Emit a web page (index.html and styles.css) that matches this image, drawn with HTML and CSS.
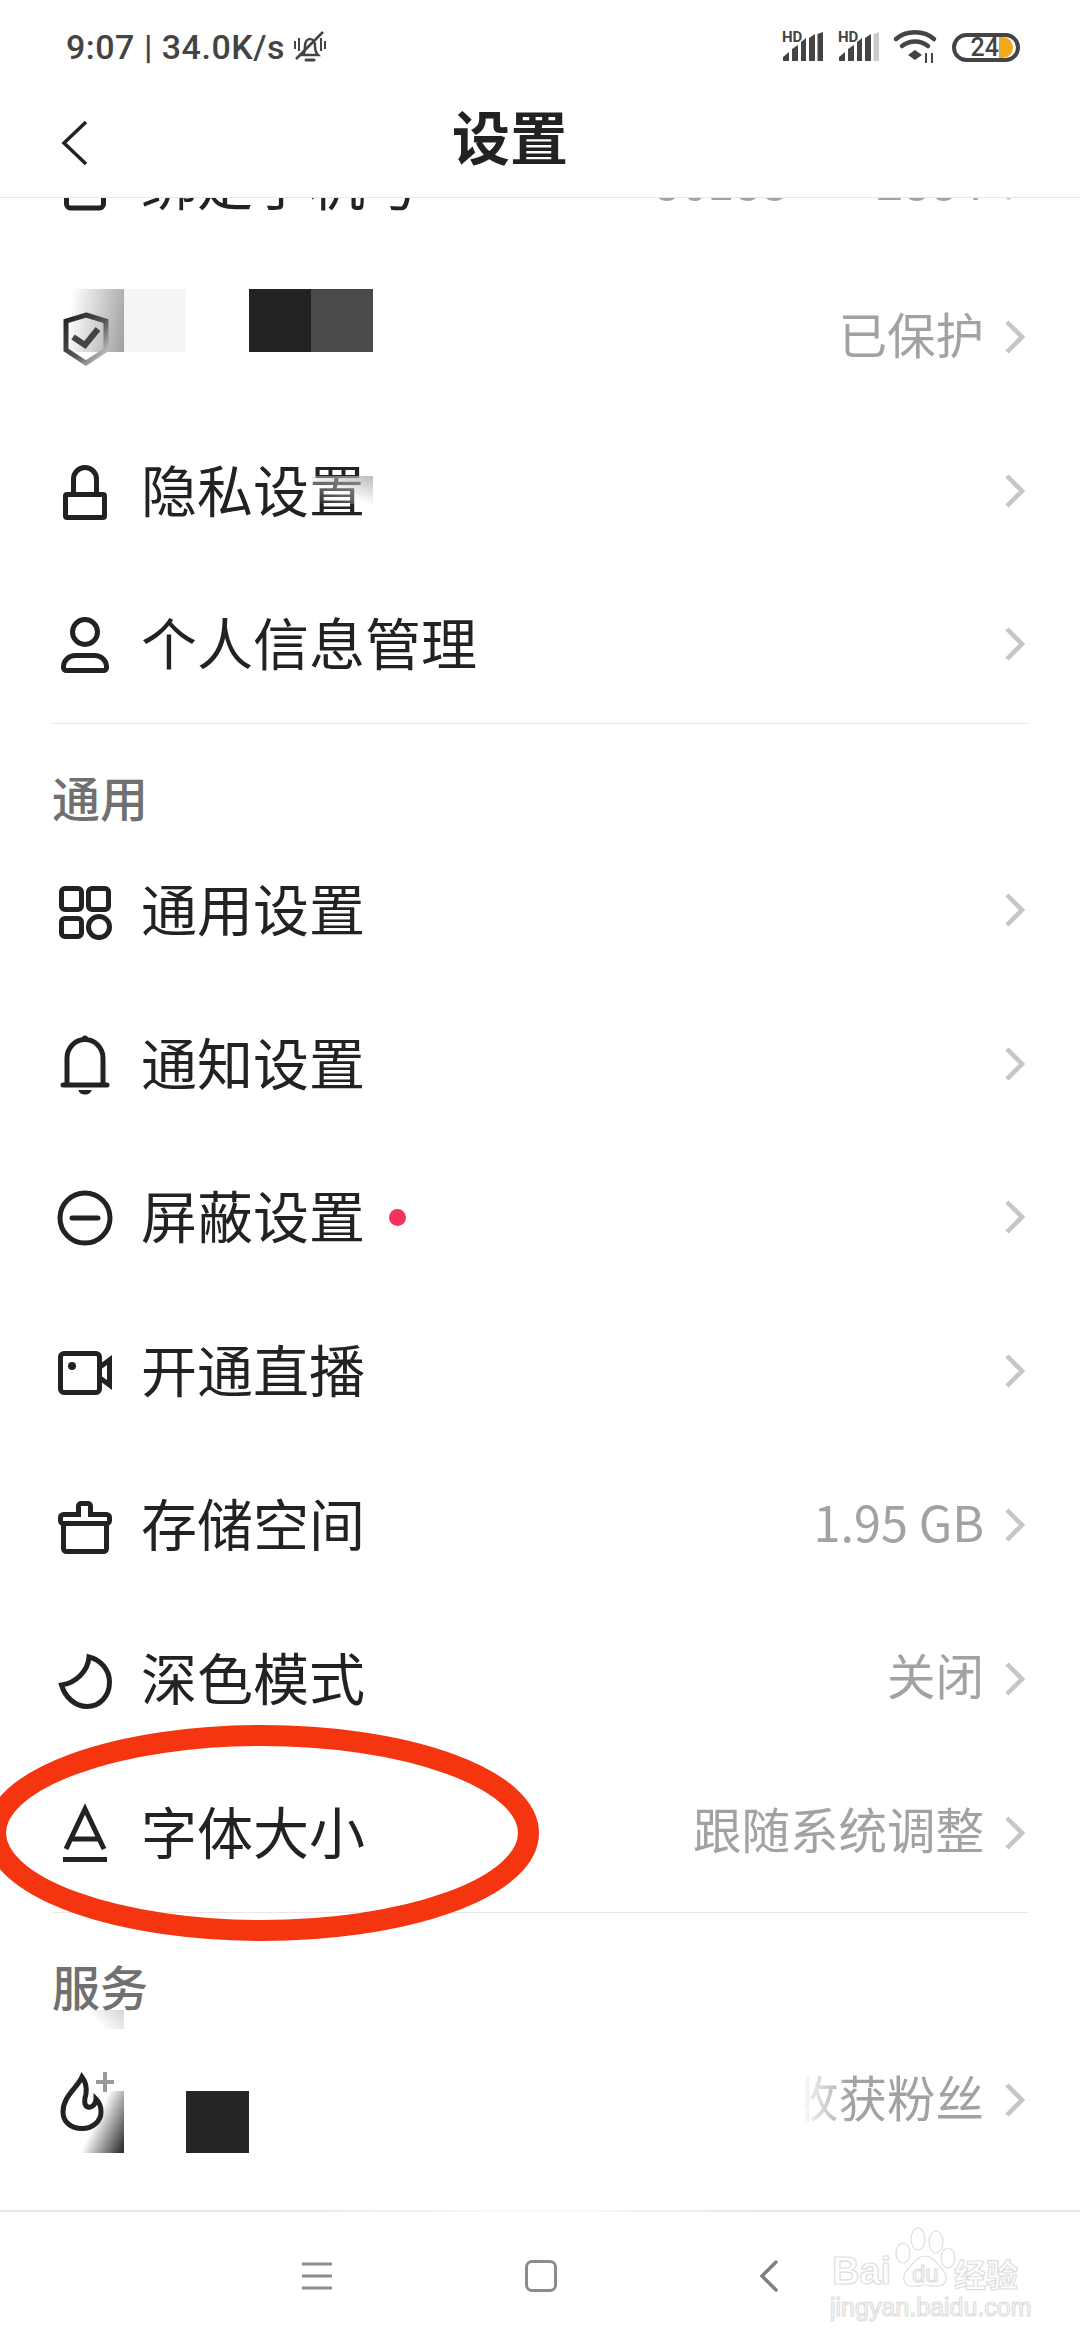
FILE: index.html
```html
<!DOCTYPE html>
<html lang="zh-CN">
<head>
    <meta charset="UTF-8">
    <meta name="viewport" content="width=device-width, initial-scale=1.0">
    <title>设置</title>
    <link rel="stylesheet" href="styles.css">
</head>
<body>
    <!-- Status bar -->
    <div class="status-bar">
        <div class="status-left">
            <span class="status-text">9:07 | 34.0K/s</span>
            <svg class="status-bell" width="34" height="32" viewBox="0 0 34 32">
                <path d="M10 24c2-2 2-5 2-9 0-4 2-7 5-7s5 3 5 7c0 4 1 7 3 9z" fill="none" stroke="#444" stroke-width="2.500"/>
                <path d="M13 29h8" stroke="#444" stroke-width="3" stroke-linecap="round"/>
                <path d="M3 28L30 1" stroke="#444" stroke-width="2.500"/>
                <path d="M2 10v8M6 7v13M28 7v13M32 10v8" stroke="#444" stroke-width="2"/>
            </svg>
        </div>
        <div class="status-right">
            <svg class="signal" width="42" height="30" viewBox="0 0 42 30">
                <text x="0" y="10" class="signal-hd">HD</text>
                <path d="M1 29V25l6-5v9z M10 29V17l6-4v16z M19 29V10l5-4v23z M27 29V6l6-4v27z" fill="#444"/>
                <path d="M35.500 29V2l5.500-2v29z" fill="#444"/>
            </svg>
            <svg class="signal" width="42" height="30" viewBox="0 0 42 30">
                <text x="0" y="10" class="signal-hd">HD</text>
                <path d="M1 29V25l6-5v9z M10 29V17l6-4v16z M19 29V10l5-4v23z M27 29V6l6-4v27z" fill="#444"/>
                <path d="M35.500 29V2l5.500-2v29z" fill="#ccc"/>
            </svg>
            <svg class="wifi" width="44" height="34" viewBox="0 0 44 34">
                <path d="M2 9C12 0 30 0 40 9" fill="none" stroke="#444" stroke-width="4.500" stroke-linecap="round"/>
                <path d="M8 16c8-6 18-6 26 0" fill="none" stroke="#444" stroke-width="4.500" stroke-linecap="round"/>
                <path d="M14 25l7-5 7 5-7 5z" fill="#444"/>
                <path d="M32 23v10M38 23v10" stroke="#444" stroke-width="2"/>
            </svg>
            <div class="battery">
                <span class="battery-num">24</span>
                <span class="battery-level"></span>
            </div>
        </div>
    </div>

    <!-- Title bar -->
    <div class="top-bar">
        <svg class="back" width="27" height="46" viewBox="0 0 27 46">
            <path d="M25 2L3 23l22 21" fill="none" stroke="#222" stroke-width="3.500"/>
        </svg>
        <h1 class="title">设置</h1>
    </div>

    <!-- List, scrolled so the first row is cut off by the title bar -->
    <div class="content">
        <div class="list">
            <div class="row">
                <svg class="icon" width="54" height="60" viewBox="0 0 54 60">
                    <rect x="8.500" y="-6" width="37" height="60" rx="4" fill="none" stroke="#222" stroke-width="5"/>
                </svg>
                <span class="name">绑定手机号</span>
                <span class="value value-phone">86188 **** 2884</span>
                <svg class="arrow" width="20" height="34" viewBox="0 0 20 34"><path d="M2 2l15 15L2 32" fill="none" stroke="#c6c6c6" stroke-width="4.500"/></svg>
            </div>
            <div class="row">
                <svg class="icon icon-top" width="54" height="60" viewBox="0 0 54 60">
                    <defs>
                        <linearGradient id="shieldFade" x1="0" y1="0" x2="1" y2="1">
                            <stop offset="0" stop-color="#222"/>
                            <stop offset="0.55" stop-color="#555"/>
                            <stop offset="1" stop-color="#ddd"/>
                        </linearGradient>
                    </defs>
                    <path d="M28 8l20 6v29L28 56 8 43V14z" fill="none" stroke="url(#shieldFade)" stroke-width="5"/>
                    <path d="M15 30l12 8 13-16" fill="none" stroke="#444" stroke-width="6"/>
                </svg>
                <span class="name"></span>
                <span class="value">已保护</span>
                <svg class="arrow" width="20" height="34" viewBox="0 0 20 34"><path d="M2 2l15 15L2 32" fill="none" stroke="#c6c6c6" stroke-width="4.500"/></svg>
            </div>
            <div class="row">
                <svg class="icon" width="54" height="60" viewBox="0 0 54 60">
                    <rect x="7.500" y="33.500" width="39" height="23" rx="1.500" fill="none" stroke="#222" stroke-width="5"/>
                    <path d="M15.500 33V18a11.500 11.500 0 0 1 23 0v15" fill="none" stroke="#222" stroke-width="5"/>
                </svg>
                <span class="name">隐私设置</span>
                <svg class="arrow" width="20" height="34" viewBox="0 0 20 34"><path d="M2 2l15 15L2 32" fill="none" stroke="#c6c6c6" stroke-width="4.500"/></svg>
            </div>
            <div class="row">
                <svg class="icon" width="54" height="60" viewBox="0 0 54 60">
                    <circle cx="27" cy="18" r="12.500" fill="none" stroke="#222" stroke-width="5"/>
                    <path d="M5.500 52a12 11 0 0 1 12-10.500h19a12 11 0 0 1 12 10.500v1.500a3 3 0 0 1-3 3h-37a3 3 0 0 1-3-3z" fill="none" stroke="#222" stroke-width="5"/>
                </svg>
                <span class="name">个人信息管理</span>
                <svg class="arrow" width="20" height="34" viewBox="0 0 20 34"><path d="M2 2l15 15L2 32" fill="none" stroke="#c6c6c6" stroke-width="4.500"/></svg>
            </div>
        </div>

        <div class="section">
            <div class="section-title">通用</div>
        </div>
        <div class="list list-general">
            <div class="row">
                <svg class="icon" width="54" height="60" viewBox="0 0 54 60">
                    <rect x="3.500" y="8.500" width="20" height="21" rx="3.500" fill="none" stroke="#222" stroke-width="5"/>
                    <rect x="30.500" y="8.500" width="20" height="21" rx="3.500" fill="none" stroke="#222" stroke-width="5"/>
                    <rect x="3.500" y="38.500" width="20" height="18" rx="3.500" fill="none" stroke="#222" stroke-width="5"/>
                    <circle cx="41" cy="47" r="10.500" fill="none" stroke="#222" stroke-width="5"/>
                </svg>
                <span class="name">通用设置</span>
                <svg class="arrow" width="20" height="34" viewBox="0 0 20 34"><path d="M2 2l15 15L2 32" fill="none" stroke="#c6c6c6" stroke-width="4.500"/></svg>
            </div>
            <div class="row">
                <svg class="icon" width="54" height="60" viewBox="0 0 54 60">
                    <path d="M9 50V24a18 18.500 0 0 1 36 0v26" fill="none" stroke="#222" stroke-width="5"/>
                    <path d="M5 51h44" stroke="#222" stroke-width="5" stroke-linecap="round"/>
                    <circle cx="27" cy="4.500" r="3" fill="#222"/>
                    <path d="M20.500 56h13a6.500 4.500 0 0 1-13 0z" fill="#222"/>
                </svg>
                <span class="name">通知设置</span>
                <svg class="arrow" width="20" height="34" viewBox="0 0 20 34"><path d="M2 2l15 15L2 32" fill="none" stroke="#c6c6c6" stroke-width="4.500"/></svg>
            </div>
            <div class="row">
                <svg class="icon" width="54" height="60" viewBox="0 0 54 60">
                    <circle cx="27" cy="31" r="25" fill="none" stroke="#222" stroke-width="5"/>
                    <path d="M14 31h26" stroke="#222" stroke-width="5" stroke-linecap="round"/>
                </svg>
                <span class="name">屏蔽设置</span>
                <span class="dot"></span>
                <svg class="arrow" width="20" height="34" viewBox="0 0 20 34"><path d="M2 2l15 15L2 32" fill="none" stroke="#c6c6c6" stroke-width="4.500"/></svg>
            </div>
            <div class="row">
                <svg class="icon" width="54" height="60" viewBox="0 0 54 60">
                    <rect x="2.500" y="12.500" width="39" height="39" rx="3.500" fill="none" stroke="#222" stroke-width="5"/>
                    <path d="M42 26l9.500-7v25L42 37" fill="none" stroke="#222" stroke-width="5"/>
                    <circle cx="14" cy="25" r="4" fill="#222"/>
                </svg>
                <span class="name">开通直播</span>
                <svg class="arrow" width="20" height="34" viewBox="0 0 20 34"><path d="M2 2l15 15L2 32" fill="none" stroke="#c6c6c6" stroke-width="4.500"/></svg>
            </div>
            <div class="row">
                <svg class="icon" width="54" height="60" viewBox="0 0 54 60">
                    <path d="M20.500 19.500H5.500a3 3 0 0 0-3 3v3a3 3 0 0 0 3 3h43a3 3 0 0 0 3-3v-3a3 3 0 0 0-3-3H32.500V11a2.500 2.500 0 0 0-2.500-2.500h-7a2.500 2.500 0 0 0-2.500 2.500z" fill="none" stroke="#222" stroke-width="5"/>
                    <path d="M5.500 28v25.500a3 3 0 0 0 3 3h37a3 3 0 0 0 3-3V28" fill="none" stroke="#222" stroke-width="5"/>
                </svg>
                <span class="name">存储空间</span>
                <span class="value">1.95 GB</span>
                <svg class="arrow" width="20" height="34" viewBox="0 0 20 34"><path d="M2 2l15 15L2 32" fill="none" stroke="#c6c6c6" stroke-width="4.500"/></svg>
            </div>
            <div class="row">
                <svg class="icon" width="54" height="60" viewBox="0 0 54 60">
                    <path d="M31 8C30 22 18 34 3.500 36 7 48 17 57.500 29 57.500 42 57.500 51.500 47 51.500 33 51.500 21 43 11 31 8z" fill="none" stroke="#222" stroke-width="5"/>
                </svg>
                <span class="name">深色模式</span>
                <span class="value">关闭</span>
                <svg class="arrow" width="20" height="34" viewBox="0 0 20 34"><path d="M2 2l15 15L2 32" fill="none" stroke="#c6c6c6" stroke-width="4.500"/></svg>
            </div>
            <div class="row">
                <svg class="icon" width="54" height="60" viewBox="0 0 54 60">
                    <path d="M8 46L27 6l19 40M13 36h28" fill="none" stroke="#222" stroke-width="5"/>
                    <path d="M5 56.500h44" stroke="#222" stroke-width="5"/>
                </svg>
                <span class="name">字体大小</span>
                <span class="value">跟随系统调整</span>
                <svg class="arrow" width="20" height="34" viewBox="0 0 20 34"><path d="M2 2l15 15L2 32" fill="none" stroke="#c6c6c6" stroke-width="4.500"/></svg>
            </div>
        </div>

        <div class="section section-service">
            <div class="section-title">服务</div>
        </div>
        <div class="list">
            <div class="row">
                <svg class="icon icon-top" width="54" height="60" viewBox="0 0 54 60">
                    <path d="M24 7C20 17 5 26 5 42c0 10 8 16.500 19 16.500S43 51 43 42c0-6-2-10-5-13 0 5-4 9-8 8-4-1-4-7-2-13 1-7-1-13-4-17z" fill="none" stroke="#222" stroke-width="5"/>
                </svg>
                <span class="name"></span>
                <span class="value">收获粉丝</span>
                <svg class="arrow" width="20" height="34" viewBox="0 0 20 34"><path d="M2 2l15 15L2 32" fill="none" stroke="#c6c6c6" stroke-width="4.500"/></svg>
            </div>
        </div>
    </div>

    <!-- Navigation bar -->
    <div class="nav-bar">
        <svg width="30" height="28" viewBox="0 0 30 28">
            <path d="M0 2h30M0 14h30M0 26h30" stroke="#8c8c8c" stroke-width="3"/>
        </svg>
        <span class="nav-home"></span>
        <svg width="18" height="32" viewBox="0 0 18 32">
            <path d="M16 2L2 16l14 14" fill="none" stroke="#808080" stroke-width="3.500" stroke-linecap="round"/>
        </svg>
    </div>

    <!-- Blurred-out patches that lie over the screenshot -->
    <div class="patch patch-shield"></div>
    <div class="patch patch-light"></div>
    <div class="patch patch-dark"></div>
    <div class="patch patch-grey"></div>
    <div class="patch patch-smudge"></div>
    <div class="patch patch-service"></div>
    <div class="patch patch-flame"></div>
    <div class="patch patch-solid"></div>
    <div class="patch patch-fade"></div>
    <svg class="flame-plus" width="18" height="20" viewBox="0 0 18 20">
        <path d="M9 0v20M0 10h18" stroke="#999" stroke-width="4"/>
    </svg>

    <!-- Hand drawn red circle -->
    <svg class="ring" width="560" height="230" viewBox="0 0 560 230">
        <ellipse cx="262" cy="113" rx="266.500" ry="97.500" fill="none" stroke="#f43510" stroke-width="21"/>
    </svg>

    <!-- Watermark -->
    <svg class="watermark" width="220" height="104" viewBox="0 0 220 104">
        <ellipse cx="88" cy="15" rx="7" ry="11"/>
        <ellipse cx="106" cy="18" rx="7" ry="11"/>
        <ellipse cx="73" cy="29" rx="7" ry="10"/>
        <ellipse cx="118" cy="34" rx="7" ry="10"/>
        <path d="M95 32c8 0 12 8 17 13 6 6 6 16-3 17-6 1-9-1-14-1s-8 2-14 1c-9-1-9-11-3-17 5-5 9-13 17-13z"/>
        <text x="2" y="60" class="wm-big">Bai</text>
        <text x="82" y="58" class="wm-du">du</text>
        <text x="124" y="63" class="wm-cn">经验</text>
        <text x="0" y="92" class="wm-url">jingyan.baidu.com</text>
    </svg>
</body>
</html>
```

FILE: styles.css
```css
/* Page */
body {
    margin: 0;
    width: 1080px;
    height: 2340px;
    display: flex;
    flex-direction: column;
    position: relative;
    overflow: hidden;
    background-color: #fff;
    font-family: "Noto Sans CJK SC", "Noto Sans", sans-serif;
    color: #222;
}

/* Status bar */
.status-bar {
    height: 94px;
    flex: none;
    display: flex;
    justify-content: space-between;
    align-items: center;
    padding: 0 60px 0 66px;
}

.status-left {
    display: flex;
    align-items: center;
    gap: 8px;
}

.status-text {
    font-family: Roboto, sans-serif;
    font-size: 34px;
    font-weight: 500;
    letter-spacing: 0.5px;
    color: #444;
}

.status-right {
    display: flex;
    align-items: center;
    gap: 14px;
}

.signal,
.wifi {
    overflow: visible;
}

.signal-hd {
    font-family: Roboto, sans-serif;
    font-size: 15px;
    font-weight: 700;
    fill: #444;
}

.battery {
    width: 54px;
    height: 21px;
    padding: 0 3px;
    border: 4px solid #444;
    border-radius: 16px;
    display: flex;
    justify-content: flex-end;
    align-items: center;
}

.battery-num {
    font-family: Roboto, sans-serif;
    font-size: 25px;
    font-weight: 500;
    color: #444;
}

.battery-level {
    width: 14px;
    height: 21px;
    border-radius: 0 12px 12px 0;
    background-color: #f2a922;
}

/* Title bar */
.top-bar {
    height: 103px;
    flex: none;
    display: flex;
    align-items: center;
    justify-content: center;
    position: relative;
    border-bottom: 1px solid #e8e8e8;
    background-color: #fff;
    z-index: 3;
}

.back {
    position: absolute;
    left: 61px;
    top: 26px;
}

.title {
    margin: 0;
    font-size: 58px;
    font-weight: 700;
    line-height: 80px;
    position: relative;
    top: -11px;
    left: -30px;
}

/* List */
.content {
    flex: 1;
    min-height: 0;
    overflow: hidden;
}

.list {
    padding: 0 55px 0 58px;
}

.content > .list:first-child {
    margin-top: -91px;
}

.row {
    height: 153.5px;
    display: flex;
    align-items: center;
}

.list-general .row {
    height: 153.8px;
}

.icon {
    flex: none;
    margin-right: 29px;
    overflow: visible;
}

/* shield and flame stay sharp on top of the patches */
.icon-top {
    position: relative;
    z-index: 2;
}

.name {
    margin-bottom: 6px;
    font-size: 56px;
    line-height: 60px;
    color: #222;
}

.value {
    margin-left: auto;
    margin-bottom: 9px;
    font-size: 48.5px;
    line-height: 60px;
    color: #a2a2a2;
    white-space: nowrap;
}

.value-phone {
    word-spacing: -12px;
}

.arrow {
    flex: none;
    margin-left: 21px;
}

.row > .name + .arrow,
.row > .dot + .arrow {
    margin-left: auto;
}

.dot {
    width: 17px;
    height: 17px;
    margin-left: 24px;
    border-radius: 50%;
    background-color: #f5325f;
}

/* Section heading */
.section {
    height: 110px;
    box-sizing: border-box;
    margin: 2px 52px 0;
    padding-top: 42px;
    border-top: 1px solid #e8e8e8;
}

.section-service {
    height: 112px;
}

.section-title {
    font-size: 48px;
    font-weight: 500;
    line-height: 60px;
    color: #707070;
}

/* Navigation bar */
.nav-bar {
    height: 130px;
    flex: none;
    box-sizing: border-box;
    display: flex;
    align-items: center;
    gap: 193px;
    padding-left: 302px;
    position: relative;
    background-color: #fff;
    border-top: 2px solid;
    border-image: linear-gradient(to right, #e6e6e6 25%, #f7f7f7 45%, #f7f7f7 55%, #e6e6e6 70%) 1;
}

.nav-home {
    width: 26px;
    height: 26px;
    margin-right: 10px;
    border: 3px solid #8c8c8c;
    border-radius: 7px;
}

/* Patches over the screenshot */
.patch {
    position: absolute;
}

.patch-shield {
    left: 62px;
    top: 289px;
    width: 62px;
    height: 63px;
    background: linear-gradient(100deg, rgba(154, 154, 154, 0) 15%, rgba(154, 154, 154, 0.95));
}

.patch-light {
    left: 124px;
    top: 289px;
    width: 62px;
    height: 63px;
    background-color: #f5f5f5;
}

.patch-dark {
    left: 249px;
    top: 289px;
    width: 62px;
    height: 63px;
    background-color: #222;
}

.patch-grey {
    left: 311px;
    top: 289px;
    width: 62px;
    height: 63px;
    background-color: #4a4a4a;
}

.patch-smudge {
    left: 312px;
    top: 476px;
    width: 61px;
    height: 28px;
    background: linear-gradient(200deg, rgba(170, 170, 170, 0.8), rgba(255, 255, 255, 0.3) 60%, rgba(255, 255, 255, 0));
}

.patch-service {
    left: 90px;
    top: 2010px;
    width: 34px;
    height: 19px;
    background: linear-gradient(225deg, #d4d4d4, rgba(255, 255, 255, 0) 75%);
}

.patch-flame {
    left: 80px;
    top: 2091px;
    width: 44px;
    height: 62px;
    background: linear-gradient(115deg, rgba(51, 51, 51, 0) 40%, #333 95%);
}

.patch-solid {
    left: 186px;
    top: 2091px;
    width: 63px;
    height: 62px;
    background-color: #252525;
}

.patch-fade {
    left: 780px;
    top: 2060px;
    width: 70px;
    height: 70px;
    background: linear-gradient(to right, #fff 30%, rgba(255, 255, 255, 0));
}

.flame-plus {
    position: absolute;
    left: 96px;
    top: 2072px;
}

/* Red circle */
.ring {
    position: absolute;
    left: 0;
    top: 1720px;
}

/* Watermark */
.watermark {
    position: absolute;
    left: 830px;
    top: 2224px;
    fill: #fff;
    stroke: #dedede;
    stroke-width: 1.2px;
}

.watermark text {
    font-family: "Liberation Sans", sans-serif;
}

.watermark .wm-big {
    font-size: 38px;
    font-weight: 700;
}

.watermark .wm-du {
    font-size: 24px;
}

.watermark .wm-cn {
    font-family: "Noto Sans CJK SC", sans-serif;
    font-size: 32px;
    font-weight: 700;
}

.watermark .wm-url {
    font-size: 25px;
}
```
